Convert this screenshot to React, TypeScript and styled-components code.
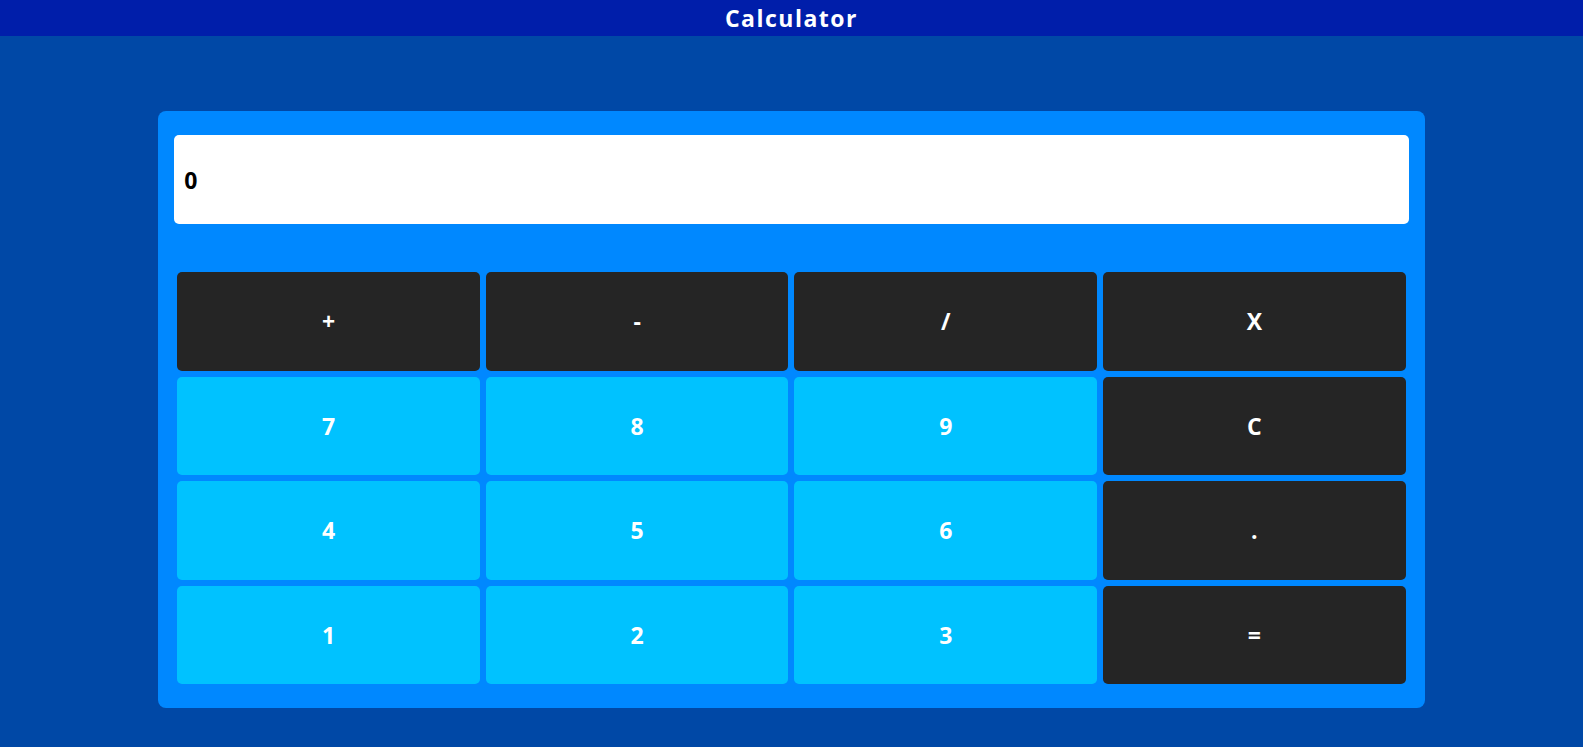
import React, { useState } from 'react';
import styled, { createGlobalStyle } from 'styled-components';

const GlobalStyle = createGlobalStyle`
  html, body {
    margin: 0;
    padding: 0;
    background: #0048a6;
    font-family: "Open Sans", "Liberation Sans", sans-serif;
  }
`;

const Page = styled.div`
  min-height: 747px;
  background: #0048a6;
`;

const Header = styled.header`
  height: 36px;
  background: #001eaa;
  color: #fff;
  display: flex;
  align-items: center;
  justify-content: center;
  font-size: 23px;
  font-weight: 700;
  letter-spacing: 1.5px;
`;

const CalculatorCard = styled.div`
  width: 80%;
  margin: 75px auto 0;
  background: #0088ff;
  border-radius: 8px;
  padding: 24px 16px 21px;
  box-sizing: border-box;
`;

const Display = styled.div`
  height: 89px;
  background: #fff;
  border-radius: 5px;
  display: flex;
  align-items: center;
  padding: 0 10px;
  font-size: 23px;
  font-weight: 700;
  color: #000;
  letter-spacing: 0.5px;
`;

const Keypad = styled.div`
  display: grid;
  grid-template-columns: repeat(4, 1fr);
  margin-top: 45px;
`;

const Key = styled.button<{ dark?: boolean }>`
  height: 98.5px;
  margin: 3px;
  border: none;
  border-radius: 5px;
  background: ${props => (props.dark ? '#252525' : '#00c2ff')};
  color: #fff;
  font-family: "Open Sans", "Liberation Sans", sans-serif;
  font-size: 23px;
  font-weight: 700;
  cursor: pointer;
  &:hover {
    opacity: 0.92;
  }
`;

const keys: { label: string; dark?: boolean }[] = [
  { label: '+', dark: true },
  { label: '-', dark: true },
  { label: '/', dark: true },
  { label: 'X', dark: true },
  { label: '7' },
  { label: '8' },
  { label: '9' },
  { label: 'C', dark: true },
  { label: '4' },
  { label: '5' },
  { label: '6' },
  { label: '.', dark: true },
  { label: '1' },
  { label: '2' },
  { label: '3' },
  { label: '=', dark: true },
];

const App: React.FC = () => {
  const [value, setValue] = useState('0');

  const handleKey = (label: string) => {
    if (label === 'C') {
      setValue('0');
      return;
    }
    if (label === '=') {
      try {
        const expr = value.replace(/X/g, '*');
        // eslint-disable-next-line no-new-func
        const result = Function(`return (${expr})`)();
        setValue(String(result));
      } catch (err) {
        setValue('Error');
      }
      return;
    }
    setValue(prev => (prev === '0' && label !== '.' ? label : prev + label));
  };

  return (
    <Page>
      <GlobalStyle />
      <Header>Calculator</Header>
      <CalculatorCard>
        <Display>{value}</Display>
        <Keypad>
          {keys.map(k => (
            <Key key={k.label} dark={k.dark} onClick={() => handleKey(k.label)}>
              {k.label}
            </Key>
          ))}
        </Keypad>
      </CalculatorCard>
    </Page>
  );
};

export default App;
